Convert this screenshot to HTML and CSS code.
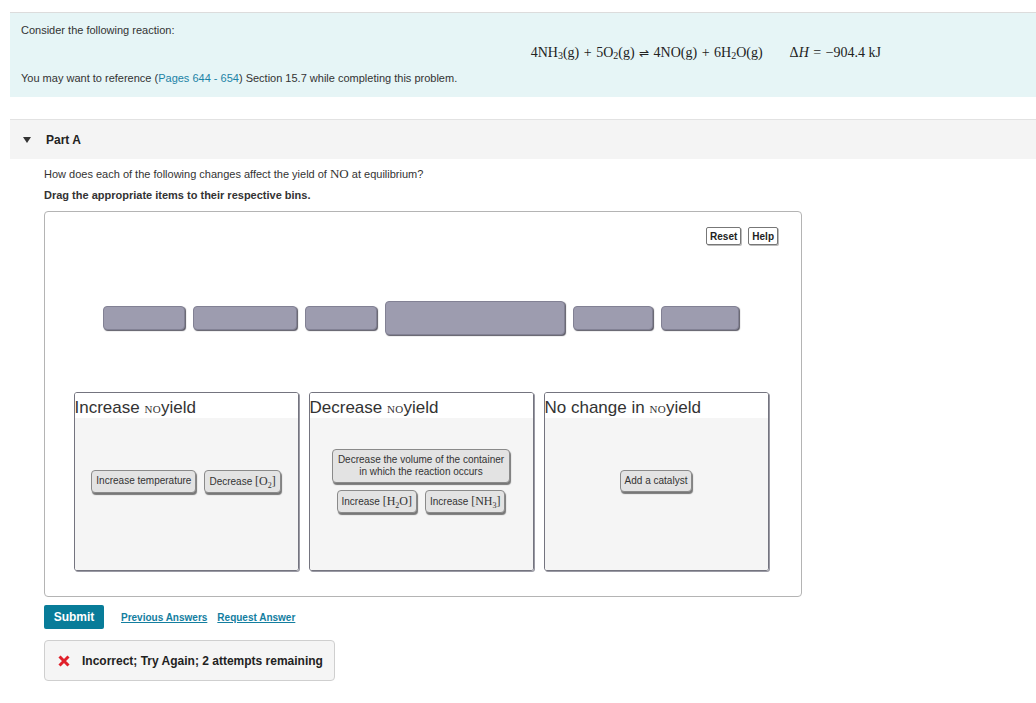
FILE: index.html
```html
<!DOCTYPE html>
<html>
<head>
<meta charset="utf-8">
<link rel="stylesheet" href="styles.css">
</head>
<body>
<div class="page">
  <section class="intro">
    <p class="intro-line">Consider the following reaction:</p>
    <div class="equation">
      <span class="eq">4NH<sub>3</sub>(g) <span class="op">+</span> 5O<sub>2</sub>(g) <span class="op harp">⇌</span> 4NO(g) <span class="op">+</span> 6H<sub>2</sub>O(g)</span>
      <span class="eq dh">Δ<i>H</i> <span class="op">=</span> −904.4 kJ</span>
    </div>
    <p class="intro-line ref">You may want to reference (<a class="link" href="#">Pages 644 - 654</a>) Section 15.7 while completing this problem.</p>
  </section>

  <section class="part-head">
    <span class="caret"></span>
    <span class="part-title">Part A</span>
  </section>

  <div class="part-body">
    <p class="question">How does each of the following changes affect the yield of <span class="m">NO</span> at equilibrium?</p>
    <p class="instr">Drag the appropriate items to their respective bins.</p>

    <div class="panel">
      <div class="panel-tools">
        <button class="tool-btn">Reset</button>
        <button class="tool-btn">Help</button>
      </div>
      <div class="tokens">
        <span class="token" style="width:82px"></span>
        <span class="token" style="width:104px"></span>
        <span class="token" style="width:72px"></span>
        <span class="token big" style="width:180px"></span>
        <span class="token" style="width:80px"></span>
        <span class="token" style="width:78px"></span>
      </div>
      <div class="bins">
        <div class="bin">
          <div class="bin-title">Increase <span class="sc">NO</span>yield</div>
          <div class="bin-body">
            <span class="item">Increase temperature</span>
            <span class="item">Decrease <span class="m">[O<sub>2</sub>]</span></span>
          </div>
        </div>
        <div class="bin">
          <div class="bin-title">Decrease <span class="sc">NO</span>yield</div>
          <div class="bin-body">
            <span class="item wide">Decrease the volume of the container<br>in which the reaction occurs</span>
            <span class="item">Increase <span class="m">[H<sub>2</sub>O]</span></span>
            <span class="item">Increase <span class="m">[NH<sub>3</sub>]</span></span>
          </div>
        </div>
        <div class="bin">
          <div class="bin-title">No change in <span class="sc">NO</span>yield</div>
          <div class="bin-body">
            <span class="item">Add a catalyst</span>
          </div>
        </div>
      </div>
    </div>

    <div class="actions">
      <button class="submit">Submit</button>
      <a class="act-link" href="#">Previous Answers</a>
      <a class="act-link" href="#">Request Answer</a>
    </div>

    <div class="feedback">
      <svg class="xmark" width="12" height="12" viewBox="0 0 12 12"><path d="M1.5 1.5 L10.5 10.5 M10.5 1.5 L1.5 10.5" stroke="#e0202a" stroke-width="3" stroke-linecap="butt"/></svg>
      <span>Incorrect; Try Again; 2 attempts remaining</span>
    </div>
  </div>
</div>
</body>
</html>
```

FILE: styles.css
```css
* { box-sizing: border-box; }
body {
  margin: 0;
  font-family: "Liberation Sans", Arial, Helvetica, sans-serif;
  color: #333;
  background: #fff;
}
.page { padding: 12px 0 0 10px; }
p { margin: 0; }

.intro {
  background: #e6f5f6;
  border-top: 1px solid #dcdcdc;
  padding: 10px 11px 12px;
}
.intro-line { font-size: 11px; line-height: 14px; color: #333; }
.equation {
  display: flex;
  justify-content: flex-end;
  gap: 27px;
  padding-right: 144px;
  margin-top: 9px;
  height: 14px;
  align-items: center;
}
.eq {
  font-family: "Liberation Serif", "Times New Roman", serif;
  font-size: 14px;
  color: #222;
  white-space: nowrap;
}
.op { padding: 0 1px; }
.eq sub { font-size: 10px; line-height: 0; vertical-align: -2px; }
.harp { font-size: 12px; }
.ref { margin-top: 11px; }
.link { color: #1c83a6; text-decoration: none; }

.part-head {
  margin-top: 22px;
  height: 40px;
  background: #f4f4f4;
  border-top: 1px solid #e2e2e2;
  display: flex;
  align-items: center;
  padding-left: 13px;
}
.caret {
  width: 0; height: 0;
  border-left: 4px solid transparent;
  border-right: 4px solid transparent;
  border-top: 6px solid #333;
  margin-right: 15px;
}
.part-title { font-size: 12px; font-weight: bold; color: #222; }

.part-body { padding: 8px 0 0 34px; }
.question { font-size: 11px; line-height: 14px; color: #333; }
.question .m { font-family: "Liberation Serif", serif; font-size: 13px; }
.instr { font-size: 11px; font-weight: bold; line-height: 14px; margin-top: 7px; color: #333; }

.panel {
  margin-top: 9px;
  width: 758px;
  height: 386px;
  border: 1px solid #b4b4b4;
  border-radius: 4px;
  padding: 15px 32px 0 28px;
}
.panel-tools { display: flex; justify-content: flex-end; gap: 7px; margin-right: -9px; }
.tool-btn {
  font-family: "Liberation Sans", Arial, sans-serif;
  font-size: 10px;
  font-weight: bold;
  color: #222;
  background: #fff;
  border: 1px solid #777;
  border-radius: 2px;
  height: 18px;
  padding: 0 3px;
  box-shadow: 1px 1px 0 #bbb;
}
.tokens {
  display: flex;
  justify-content: center;
  align-items: center;
  gap: 8px;
  margin-top: 56px;
}
.token {
  display: block;
  height: 24px;
  background: #9d9caf;
  border: 1px solid #828194;
  border-radius: 4px;
  box-shadow: 1px 1px 1px #5c5b66;
}
.token.big { height: 34px; }

.bins {
  display: flex;
  justify-content: center;
  gap: 10px;
  margin-top: 57px;
}
.bin {
  width: 225px;
  height: 179px;
  border: 1px solid #74747f;
  border-radius: 3px;
  display: flex;
  flex-direction: column;
  overflow: hidden;
  box-shadow: 1px 1px 0 #9a9aa4;
}
.bin-title {
  height: 25px;
  background: #fff;
  font-size: 17px;
  line-height: 29px;
  color: #333;
  white-space: nowrap;
}
.sc {
  font-family: "Liberation Serif", serif;
  font-size: 11px;
  letter-spacing: 0.3px;
}
.bin-body {
  flex: 1;
  background: #f5f5f5;
  display: flex;
  flex-wrap: wrap;
  justify-content: center;
  align-content: center;
  gap: 7px 8px;
  padding: 0 8px 26px;
}
.item {
  display: inline-block;
  font-size: 10px;
  line-height: 12px;
  color: #333;
  background: #e3e3e3;
  border: 1px solid #8a8a8a;
  border-radius: 4px;
  padding: 4px 4px;
  box-shadow: 1px 2px 1px #777;
  text-align: center;
  white-space: nowrap;
}
.item.wide { padding: 4px 5px; }
.item .m { font-family: "Liberation Serif", serif; font-size: 12px; }
.item sub { font-size: 8px; line-height: 0; }

.actions {
  display: flex;
  align-items: center;
  margin-top: 8px;
}
.submit {
  width: 60px;
  height: 24px;
  background: #087c99;
  color: #fff;
  font-family: "Liberation Sans", Arial, sans-serif;
  font-size: 12px;
  font-weight: bold;
  border: 0;
  border-radius: 2px;
  margin-right: 17px;
}
.act-link {
  font-size: 10px;
  font-weight: bold;
  color: #137e9f;
  text-decoration: underline;
  margin-right: 10px;
}
.feedback {
  margin-top: 11px;
  width: 291px;
  height: 41px;
  border: 1px solid #cfcfcf;
  border-radius: 4px;
  background: #f5f5f5;
  display: flex;
  align-items: center;
  padding-left: 13px;
  font-size: 12px;
  font-weight: bold;
  color: #222;
}
.xmark { margin-right: 12px; }
```
